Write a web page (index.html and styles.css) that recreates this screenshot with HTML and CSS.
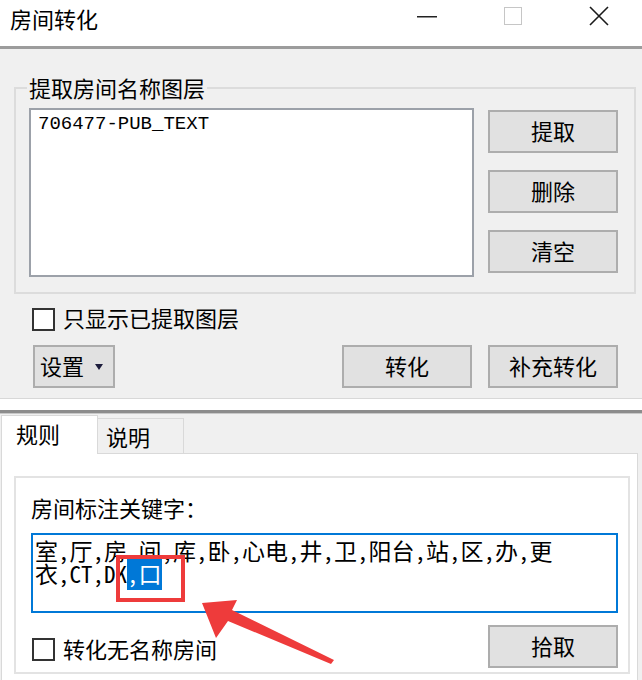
FILE: index.html
```html
<!DOCTYPE html>
<html lang="zh-CN">
<head>
    <meta charset="UTF-8">
    <meta name="viewport" content="width=device-width, initial-scale=1.0">
    <title>房间转化</title>
    <link rel="stylesheet" href="styles.css">
</head>
<body>
    <!-- Window title bar -->
    <div class="titlebar">
        <div class="title">房间转化</div>
        <div class="caption-btn">
            <svg width="20" height="20" viewBox="0 0 20 20"><rect x="0" y="10" width="20" height="1.5" fill="#222"/></svg>
        </div>
        <div class="caption-btn">
            <svg width="18" height="18" viewBox="0 0 18 18"><rect x="0.5" y="0.5" width="17" height="17" fill="none" stroke="#c6c6c6" stroke-width="1"/></svg>
        </div>
        <div class="caption-btn">
            <svg width="20" height="20" viewBox="0 0 20 20"><path d="M1 1 L19 19 M19 1 L1 19" stroke="#1a1a1a" stroke-width="1.6" fill="none"/></svg>
        </div>
    </div>

    <!-- Upper panel -->
    <div class="top-panel">
        <fieldset class="group">
            <legend>提取房间名称图层</legend>
            <div class="group-body">
                <div class="listbox">706477-PUB_TEXT</div>
                <div class="side-buttons">
                    <button class="btn">提取</button>
                    <button class="btn">删除</button>
                    <button class="btn">清空</button>
                </div>
            </div>
        </fieldset>

        <div class="check-row">
            <span class="checkbox"></span>
            <span class="check-text">只显示已提取图层</span>
        </div>

        <div class="action-row">
            <button class="btn btn-menu">设置<span class="caret"></span></button>
            <button class="btn push-right">转化</button>
            <button class="btn">补充转化</button>
        </div>
    </div>

    <div class="splitter"></div>

    <!-- Lower panel with tabs -->
    <div class="lower">
        <div class="tabs">
            <div class="tab tab-active">规则</div>
            <div class="tab">说明</div>
        </div>
        <div class="tab-page">
            <div class="keyword-box">
                <div class="box-label">房间标注关键字：</div>
                <div class="textbox">室,厅,房,间,库,卧,心电,井,卫,阳台,站,区,办,更<br>衣,CT,DK<span class="selected">,口</span></div>
                <div class="bottom-row">
                    <div class="check-row check-inline">
                        <span class="checkbox"></span>
                        <span class="check-text">转化无名称房间</span>
                    </div>
                    <button class="btn push-right">拾取</button>
                </div>
            </div>
        </div>
    </div>

    <!-- Red annotation drawn over the window -->
    <svg class="annot" width="642" height="680" viewBox="0 0 642 680">
        <rect x="118" y="557" width="65" height="43" fill="none" stroke="#ee3b3b" stroke-width="4"/>
        <polygon points="202,603 237,600 232,610 334,660 331,664 228,621 216,638" fill="#ee3b3b"/>
    </svg>
</body>
</html>
```

FILE: styles.css
```css
body {
    margin: 0;
    width: 642px;
    height: 680px;
    overflow: hidden;
    position: relative;
    background-color: #f0f0f0;
    font-family: "Noto Sans CJK SC", sans-serif;
    font-size: 22px;
    color: #000;
}

.titlebar {
    height: 46px;
    display: flex;
    background-color: #fff;
    border-bottom: 3px solid #9c9c9c;
}

.title {
    flex: 1;
    padding: 3px 0 0 10px;
    line-height: 30px;
}

.caption-btn {
    width: 86px;
    height: 31px;
    display: flex;
    align-items: center;
    justify-content: center;
}

.top-panel {
    padding: 24px 6px 10px 14px;
}

.group {
    margin: 0;
    min-width: 0;
    padding: 5px 16px 15px 13px;
    border: 2px solid #dcdcdc;
}

.group legend {
    padding: 0 2px 2px;
    margin-left: -2px;
    line-height: 28px;
}

.group-body {
    display: flex;
    gap: 14px;
}

.listbox {
    width: 445px;
    height: 169px;
    box-sizing: border-box;
    padding: 3px 7px;
    background-color: #fff;
    border: 2px solid #9ca1a9;
    font: 19px/22px "Liberation Mono", monospace;
}

.side-buttons {
    display: flex;
    flex-direction: column;
    gap: 17px;
    padding-top: 2px;
}

.btn {
    width: 130px;
    height: 43px;
    box-sizing: border-box;
    padding: 0 0 3px;
    display: flex;
    align-items: center;
    justify-content: center;
    background-color: #e1e1e1;
    border: 2px solid #adadad;
    font-family: "Noto Sans CJK SC", sans-serif;
    font-size: 22px;
    color: #000;
}

.btn-menu {
    width: 82px;
    justify-content: flex-start;
    padding-left: 5px;
}

.caret {
    margin: 3px 0 0 11px;
    border-left: 4px solid transparent;
    border-right: 4px solid transparent;
    border-top: 6px solid #1c1c3c;
}

.push-right {
    margin-left: auto;
}

.check-row {
    display: flex;
    align-items: center;
    gap: 8px;
    height: 26px;
    line-height: 26px;
    margin: 12px 0 0 18px;
}

.check-text {
    padding-bottom: 4px;
}

.checkbox {
    width: 23px;
    height: 23px;
    box-sizing: border-box;
    background-color: #fff;
    border: 2px solid #333;
}

.action-row {
    display: flex;
    gap: 16px;
    margin: 13px 18px 0 19px;
}

.splitter {
    height: 11px;
    background-color: #fff;
    border-top: 1px solid #d8d8d8;
    border-bottom: 3px solid #8c8c8c;
}

.lower {
    border-top: 1px solid #c8c8c8;
    padding: 0 4px 0 1px;
}

.tabs {
    height: 39px;
    display: flex;
    align-items: flex-end;
}

.tab {
    width: 86px;
    height: 35px;
    box-sizing: border-box;
    display: flex;
    align-items: center;
    padding: 0 0 1px 8px;
    background-color: #f0f0f0;
    border: 1px solid #d9d9d9;
    border-left: none;
    border-bottom: none;
}

.tab-active {
    width: 97px;
    height: 39px;
    margin-bottom: -1px;
    padding: 0 0 4px 14px;
    background-color: #fff;
    border-left: 1px solid #d9d9d9;
    position: relative;
    z-index: 1;
}

.tab-page {
    height: 204px;
    padding: 22px 7px 0 12px;
    background-color: #fff;
    border: 1px solid #d9d9d9;
    border-bottom: none;
}

.keyword-box {
    padding: 14px 10px 4px 15px;
    border: 2px solid #e3e3e3;
}

.box-label {
    line-height: 30px;
    padding-bottom: 2px;
    margin-bottom: -2px;
}

.textbox {
    height: 80px;
    box-sizing: border-box;
    margin-top: 11px;
    padding: 4px 2px;
    border: 2px solid #0078d7;
    font: 23px/23px "Noto Sans Mono CJK SC", "Liberation Mono", "Noto Sans CJK SC", monospace;
    white-space: nowrap;
}

.selected {
    background-color: #0078d7;
    color: #fff;
}

.bottom-row {
    display: flex;
    align-items: center;
    margin-top: 12px;
}

.check-inline {
    margin: 6px 0 0 1px;
}

.annot {
    position: absolute;
    top: 0;
    left: 0;
    pointer-events: none;
}
```
